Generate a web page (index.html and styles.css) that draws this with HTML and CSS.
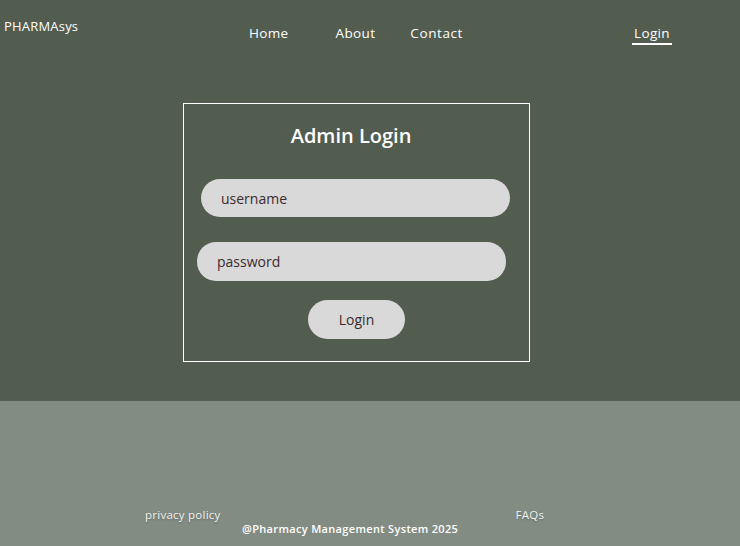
FILE: index.html
```html
<!DOCTYPE html>
<html>
<head>
<meta charset="utf-8">
<link rel="stylesheet" href="styles.css">
</head>
<body>
<div class="top">
  <header class="header">
    <div class="logo">PHARMAsys</div>
    <nav class="nav">
      <a class="nav-link home">Home</a>
      <a class="nav-link about">About</a>
      <a class="nav-link contact">Contact</a>
    </nav>
    <a class="nav-link login-link">Login</a>
  </header>
  <section class="box">
    <h1 class="title">Admin Login</h1>
    <div class="field field-user">username</div>
    <div class="field field-pass">password</div>
    <div class="btn-row"><button class="btn">Login</button></div>
  </section>
</div>
<footer class="footer">
  <div class="footer-links">
    <a class="flink privacy">privacy policy</a>
    <a class="flink faqs">FAQs</a>
  </div>
  <div class="copy">@Pharmacy Management System 2025</div>
</footer>
</body>
</html>
```
FILE: styles.css
```css
* { box-sizing: border-box; }
body {
  margin: 0;
  font-family: "Open Sans", "Noto Sans", sans-serif;
  background: #838c82;
}
.top {
  background: #525c4f;
  height: 401px;
  overflow: hidden;
}
.header {
  display: flex;
  align-items: flex-start;
  height: 103px;
}
.logo {
  color: #fff;
  font-size: 13px;
  font-weight: 500;
  letter-spacing: 0.2px;
  padding-left: 4px;
  padding-top: 17px;
  width: 249px;
}
.nav {
  display: flex;
  padding-top: 24px;
}
.nav-link {
  color: #fff;
  font-size: 13.5px;
  line-height: 18px;
  letter-spacing: 0.35px;
  text-decoration: none;
}
.about { margin-left: 47px; }
.contact { margin-left: 35px; letter-spacing: 0.6px; }
.login-link {
  margin-left: auto;
  margin-right: 68px;
  margin-top: 24px;
  padding: 0 2px 1px;
  border-bottom: 2px solid #fff;
}
.box {
  margin-left: 183px;
  width: 347px;
  height: 259px;
  border: 1.5px solid #fff;
  display: flex;
  flex-direction: column;
}
.title {
  margin: 19px 0 0;
  text-align: center;
  color: #fff;
  font-size: 20px;
  font-weight: 600;
  line-height: 26px;
  padding-right: 11px;
}
.field {
  width: 309px;
  height: 38px;
  border-radius: 19px;
  background: #d9d9d9;
  color: #3b2b2e;
  font-size: 14px;
  display: flex;
  align-items: center;
  padding-left: 20px;
}
.field-user { margin: 30px 0 0 17px; }
.field-pass { margin: 25px 0 0 13px; height: 39px; }
.btn-row {
  display: flex;
  margin-top: 19px;
  padding-left: 124px;
}
.btn {
  width: 97px;
  height: 39px;
  border: none;
  border-radius: 20px;
  background: #d9d9d9;
  color: #3b2b2e;
  font-family: inherit;
  font-size: 14px;
}
.footer {
  height: 145px;
  display: flex;
  flex-direction: column;
  padding-top: 107px;
}
.footer-links {
  display: flex;
  padding-left: 145px;
}
.flink {
  color: #f2f2f2;
  font-size: 11.5px;
  line-height: 14px;
  letter-spacing: 0.25px;
  text-shadow: 0 1px 2px rgba(0,0,0,0.25);
}
.faqs { margin-left: 295px; }
.copy {
  color: #fff;
  font-size: 11px;
  font-weight: 600;
  line-height: 14px;
  letter-spacing: 0.33px;
  padding-left: 242px;
}
```
